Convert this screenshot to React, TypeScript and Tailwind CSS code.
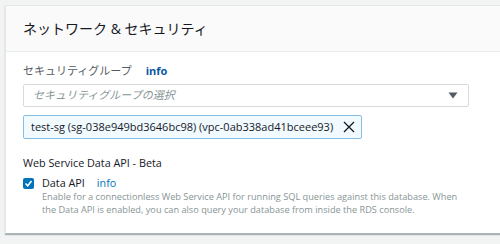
import React from "react";

const font = { fontFamily: '"Open Sans", "Noto Sans CJK JP", sans-serif' };

export default function App() {
  return (
    <div className="w-[500px] h-[244px] bg-[#f2f3f3] pt-[5px] pl-[5px] overflow-hidden" style={font}>
      <div className="bg-white border-l border-t border-[#e6e8e8] shadow-[0_1px_1px_0_rgba(0,28,36,0.3)] border-b border-b-[#aab7b8] h-[229px]">
        <div className="h-[46px] bg-[#fafafa] border-b border-[#eaeded] flex items-center pl-[17px]">
          <span className="text-[14px] text-[#16191f] leading-none">ネットワーク &amp; セキュリティ</span>
        </div>
        <div className="pl-[17px] pt-[10px]">
          <div className="flex items-center h-[18px] gap-[14px]">
            <span className="text-[11px] text-[#545b64]">セキュリティグループ</span>
            <span className="text-[11px] font-bold text-[#0a57a5]">info</span>
          </div>
          <div className="mt-[4px] w-[446px] h-[23px] border border-[#d5dbdb] rounded-[2px] flex items-center justify-between pl-[9px] pr-[10px]">
            <span className="text-[11px] italic text-[#879596]">セキュリティグループの選択</span>
            <svg width="10" height="7" viewBox="0 0 10 7"><path d="M0.5 0.5 H9.5 L5 6.5 Z" fill="#545b64" /></svg>
          </div>
          <div className="mt-[8px] w-[339px] h-[24px] border border-[#86bfe6] bg-[#f1faff] rounded-[2px] flex items-center pl-[7px] pr-[6px] justify-between">
            <span className="text-[11px] text-[#16191f] whitespace-nowrap">test-sg (sg-038e949bd3646bc98) (vpc-0ab338ad41bceee93)</span>
            <svg width="12" height="12" viewBox="0 0 12 12"><path d="M1 1 L11 11 M11 1 L1 11" stroke="#16191f" strokeWidth="1.3" /></svg>
          </div>
          <div className="mt-[19px] text-[10.8px] text-[#16191f] leading-none">Web Service Data API - Beta</div>
          <div className="mt-[8px] flex">
            <div className="w-[11px] h-[11px] bg-[#0073bb] rounded-[2px] flex items-center justify-center mt-[1px]">
              <svg width="9" height="9" viewBox="0 0 9 9"><path d="M1.5 4.5 L3.7 6.7 L7.5 2" stroke="white" strokeWidth="1.6" fill="none" /></svg>
            </div>
            <div className="ml-[8px]">
              <div className="flex items-center gap-[12px] h-[13px]">
                <span className="text-[10.8px] text-[#16191f]">Data API</span>
                <span className="text-[10.8px] text-[#0073bb]">info</span>
              </div>
              <div className="text-[9.2px] text-[#879596] leading-[13px] w-[420px]">
                Enable for a connectionless Web Service API for running SQL queries against this database. When the Data API is enabled, you can also query your database from inside the RDS console.
              </div>
            </div>
          </div>
        </div>
      </div>
    </div>
  );
}
